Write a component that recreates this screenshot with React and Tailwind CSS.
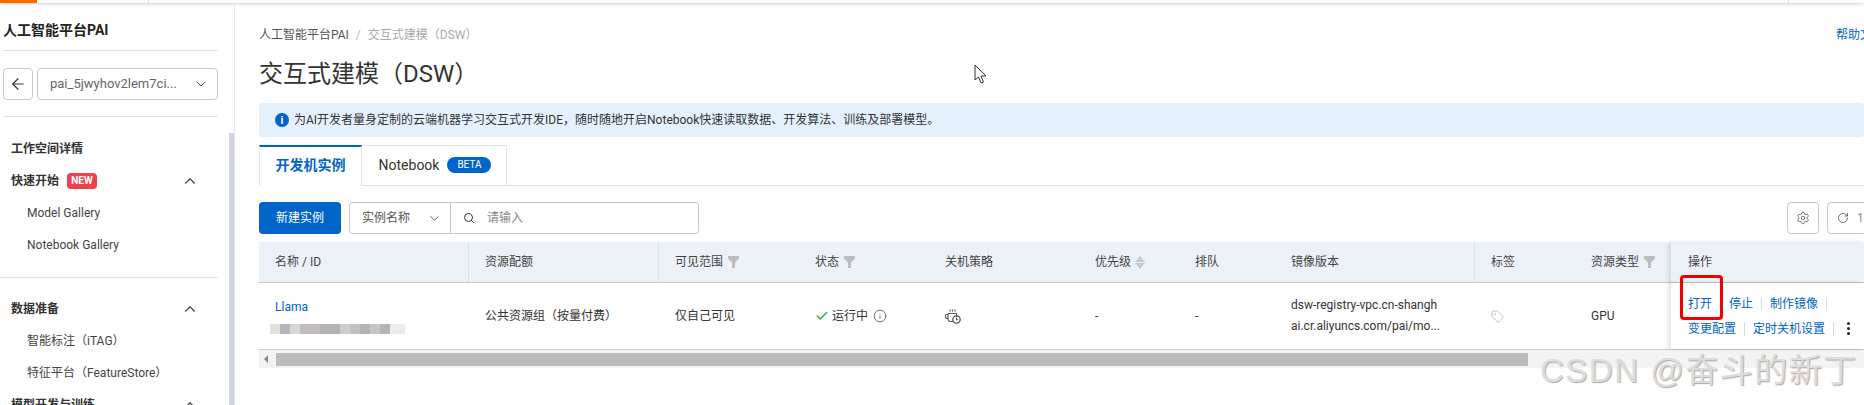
import React from 'react';
import { ArrowLeft, ChevronDown, ChevronUp, Search, Settings, RotateCw, Check, Info, Tag } from 'lucide-react';

const FONT = "font-['Roboto','Noto_Sans_CJK_SC',sans-serif]";
const COLS = 'grid grid-cols-[210px_190px_140px_130px_150px_100px_96px_200px_100px_96px_193px]';

const Funnel = () => (
    <svg width="11" height="12" viewBox="0 0 11 12" className="ml-[5px] text-[#bdbdbd]">
        <path d="M0 0h11v2.5L7 6.5V12H4V6.5L0 2.5z" fill="currentColor" />
    </svg>
);

// cup with a small clock, the shutdown policy icon
const ShutdownIcon = () => (
    <svg width="16" height="15" viewBox="0 0 16 15" fill="none" stroke="#555" strokeWidth="1.1">
        <path d="M5 0.5v2M7.5 0.5v2M10 0.5v2" />
        <path d="M3 4.5h8.5v4M3 4.5v5.5a2.5 2.5 0 0 0 2.5 2.5H8M3 5.5H1.5a1 1 0 0 0-1 1v1.5a1.5 1.5 0 0 0 2.5 1" />
        <circle cx="11.5" cy="10.5" r="3.7" strokeWidth="1.3" />
        <path d="M11.5 9v1.7h1.6" />
    </svg>
);

const Sep = () => <span className="mx-2 inline-block h-[14px] w-px bg-[#d9d9d9]"></span>;

const SideGroup = ({ title, badge, children }) => (
    <div>
        <div className="flex h-8 items-center justify-between pl-[11px] pr-[19px]">
            <div className="flex items-center gap-2 font-bold text-[#333]">
                <span>{title}</span>
                {badge && (
                    <span className="flex h-4 w-[30px] items-center justify-center rounded-sm bg-[#f0404d] text-[10px] font-bold leading-none text-white">
                        {badge}
                    </span>
                )}
            </div>
            <ChevronUp size={18} strokeWidth={1.5} className="text-[#444]" />
        </div>
        {children}
    </div>
);

const SideItem = ({ children }) => (
    <div className="flex h-8 items-center pl-[27px] text-[#444]">{children}</div>
);

const Sidebar = () => (
    <aside className="relative h-full w-[235px] shrink-0 overflow-hidden border-r border-[#e6e6e6] text-xs">
        <div className="w-[218px]">
            <div className="ml-[3px] flex h-[48px] items-center border-b border-[#e3e3e3] pt-[7px] text-sm font-bold text-[#222]">
                人工智能平台PAI
            </div>
            <div className="ml-[3px] flex gap-1 border-b border-[#e3e3e3] pb-4 pt-[17px]">
                <div className="flex h-8 w-[30px] items-center justify-center rounded-sm border border-[#c9c9c9]">
                    <ArrowLeft size={18} strokeWidth={1.5} className="text-[#333]" />
                </div>
                <div className="flex h-8 w-[181px] items-center justify-between rounded-sm border border-[#c9c9c9] pl-3 pr-2 text-[#666]">
                    <span className="text-[13px]">pai_5jwyhov2lem7ci...</span>
                    <ChevronDown size={16} strokeWidth={1.5} className="text-[#555]" />
                </div>
            </div>
            <div className="border-b border-[#e3e3e3] pb-4 pt-4">
                <div className="flex h-8 items-center pl-[11px] font-bold text-[#333]">工作空间详情</div>
                <SideGroup title="快速开始" badge="NEW">
                    <SideItem>Model Gallery</SideItem>
                    <SideItem>Notebook Gallery</SideItem>
                </SideGroup>
            </div>
            <div className="pt-[15px]">
                <SideGroup title="数据准备">
                    <SideItem>智能标注（iTAG）</SideItem>
                    <SideItem>特征平台（FeatureStore）</SideItem>
                </SideGroup>
                <SideGroup title="模型开发与训练" />
            </div>
        </div>
        <div className="absolute bottom-0 right-0 top-[130px] w-[5px] bg-[#cfd4df]"></div>
    </aside>
);

const Head = ({ children, line }) => (
    <div className={`flex h-full items-center pl-4 ${line ? 'border-r border-[#d5e2f0]' : ''}`}>{children}</div>
);

const Cell = ({ children }) => <div className="flex h-full items-center pl-4 text-[#333]">{children}</div>;

const Table = () => (
    <div className="relative mt-2 text-xs">
        <div className={`${COLS} h-[41px] border-b border-[#c8c8c8] bg-[#ecf1f7] text-[#444]`}>
            <Head line>名称 / ID</Head>
            <Head line>资源配额</Head>
            <Head>可见范围<Funnel /></Head>
            <Head>状态<Funnel /></Head>
            <Head>关机策略</Head>
            <Head>
                优先级
                <span className="ml-1 flex flex-col gap-px">
                    <span className="h-0 w-0 border-x-[5px] border-b-[6px] border-x-transparent border-b-[#c4c9d1]"></span>
                    <span className="h-0 w-0 border-x-[5px] border-t-[6px] border-x-transparent border-t-[#c4c9d1]"></span>
                </span>
            </Head>
            <Head>排队</Head>
            <Head line>镜像版本</Head>
            <Head>标签</Head>
            <Head>资源类型<Funnel /></Head>
            <div className="flex h-full items-center pl-[17px] shadow-[-3px_0_4px_rgba(0,0,0,0.1)]">操作</div>
        </div>
        <div className={`${COLS} h-[67px] border-b border-[#c8c8c8]`}>
            <div className="flex h-full flex-col justify-center pl-4">
                <span className="text-[#0064c8]">Llama</span>
                <div className="-ml-[5px] mt-[9px] flex h-[10px] w-[135px] bg-[#d2d2d4]">
                    <span className="w-[10px] bg-[#e3dfdc]"></span>
                    <span className="w-[10px] bg-[#b5b5bb]"></span>
                    <span className="w-[10px] bg-[#d6d6d8]"></span>
                    <span className="w-[20px] bg-[#c0bcbc]"></span>
                    <span className="w-[20px] bg-[#b4b2b3]"></span>
                    <span className="w-[10px] bg-[#cdcdcf]"></span>
                    <span className="w-[10px] bg-[#bfc2c5]"></span>
                    <span className="w-[10px] bg-[#b5b3b5]"></span>
                    <span className="w-[10px] bg-[#c6c6c8]"></span>
                    <span className="w-[10px] bg-[#b8b4b4]"></span>
                    <span className="w-[15px] bg-[#ececec]"></span>
                </div>
            </div>
            <Cell>公共资源组（按量付费）</Cell>
            <Cell>仅自己可见</Cell>
            <Cell>
                <Check size={14} strokeWidth={2.5} className="mr-[3px] text-[#1fb141]" />
                运行中
                <Info size={14} strokeWidth={1.4} className="ml-[5px] text-[#555]" />
            </Cell>
            <Cell>
                <ShutdownIcon />
            </Cell>
            <Cell>-</Cell>
            <Cell>-</Cell>
            <div className="flex h-full flex-col justify-center gap-[6px] pl-4 leading-[15px] text-[#333]">
                <span>dsw-registry-vpc.cn-shangh</span>
                <span>ai.cr.aliyuncs.com/pai/mo...</span>
            </div>
            <Cell>
                <Tag size={13} strokeWidth={1.3} className="text-[#a5a8b5]" />
            </Cell>
            <Cell>GPU</Cell>
            <div className="flex h-full flex-col justify-center gap-[9px] pl-[17px] leading-[16px] text-[#0064c8] shadow-[-3px_0_4px_rgba(0,0,0,0.1)]">
                <div className="flex items-center whitespace-nowrap">
                    <span>打开</span>
                    <span className="w-[17px]"></span>
                    <span>停止</span>
                    <Sep />
                    <span>制作镜像</span>
                    <Sep />
                </div>
                <div className="flex items-center whitespace-nowrap">
                    <span>变更配置</span>
                    <Sep />
                    <span>定时关机设置</span>
                    <Sep />
                    <span className="ml-[5px] flex flex-col gap-[2px]">
                        <span className="h-[3px] w-[3px] rounded-full bg-[#222]"></span>
                        <span className="h-[3px] w-[3px] rounded-full bg-[#222]"></span>
                        <span className="h-[3px] w-[3px] rounded-full bg-[#222]"></span>
                    </span>
                </div>
            </div>
        </div>
        <div className="flex h-[18px] items-center bg-[#f3f3f3] pr-[336px]">
            <span className="ml-[5px] h-0 w-0 border-y-[4px] border-r-[4px] border-y-transparent border-r-[#888]"></span>
            <div className="ml-2 h-[13px] flex-1 bg-[#bcbcbc]"></div>
        </div>
        {/* red highlight round the open button */}
        <div className="absolute left-[1421px] top-[33px] h-[45px] w-[43px] rounded-sm border-[3px] border-[#f00000]"></div>
    </div>
);

const Main = () => (
    <main className="min-w-0 flex-1 overflow-hidden pl-6 pt-4">
        <div className="flex h-6 items-end justify-between text-xs">
            <div className="text-[#555]">
                人工智能平台PAI <span className="mx-1 text-[#bbb]">/</span> <span className="text-[#aaa]">交互式建模（DSW）</span>
            </div>
            <div className="w-7 overflow-hidden whitespace-nowrap text-[#0064c8]">帮助文档</div>
        </div>
        <h1 className="mt-[14px] text-2xl leading-[34px] text-[#333]">交互式建模（DSW）</h1>
        <div className="mt-3 flex h-[34px] items-center rounded-sm bg-[#e4f1fd] pl-4 text-xs text-[#333]">
            <span className="mr-[5px] flex h-[14px] w-[14px] items-center justify-center rounded-full bg-[#0064c8] text-[11px] font-bold leading-none text-white">i</span>
            为AI开发者量身定制的云端机器学习交互式开发IDE，随时随地开启Notebook快速读取数据、开发算法、训练及部署模型。
        </div>
        <div className="mt-2 flex h-[41px] border-b border-[#dedede]">
            <div className="w-[103px] -mb-px border-x border-t-2 border-x-[#e3e3e3] border-t-[#0064c8] bg-white pt-[8px] text-center text-sm font-bold text-[#0064c8]">开发机实例</div>
            <div className="flex w-[145px] items-center justify-center gap-[8px] border-r border-t border-[#e3e3e3] pb-px pl-[2px] text-sm text-[#333]">
                Notebook
                <span className="flex h-4 w-[44px] items-center justify-center rounded-full bg-[#0064c8] text-[10px] text-white">BETA</span>
            </div>
        </div>
        <div className="mt-4 flex h-8 items-center text-xs">
            <div className="flex h-8 w-[82px] items-center justify-center rounded-sm bg-[#0064c8] text-white">新建实例</div>
            <div className="ml-2 flex h-8 w-[102px] items-center justify-between rounded-l-sm border border-[#c9c9c9] pl-3 pr-2 text-[#555]">
                实例名称
                <ChevronDown size={15} strokeWidth={1.5} className="text-[#555]" />
            </div>
            <div className="flex h-8 w-[248px] items-center rounded-r-sm border border-l-0 border-[#c9c9c9] pl-3 text-[#888]">
                <Search size={12} strokeWidth={2} className="mr-[12px] text-[#333]" />
                请输入
            </div>
            <div className="ml-auto flex h-8 w-8 shrink-0 items-center justify-center rounded-sm border border-[#c9c9c9]">
                <Settings size={14} strokeWidth={1.3} className="text-[#555]" />
            </div>
            <div className="-mr-[30px] ml-2 flex h-8 w-[67px] shrink-0 items-center whitespace-nowrap rounded-sm border border-[#c9c9c9] pl-[9px] text-[#888]">
                <RotateCw size={12} strokeWidth={1.5} className="mr-2 text-[#444]" />
                1分钟
            </div>
        </div>
        <Table />
    </main>
);

export default function App() {
    return (
        <div className={`${FONT} relative h-[405px] w-[1864px] overflow-hidden bg-[#fefefe]`}>
            <div className="relative flex h-[3px] items-start justify-between bg-white pr-[75px] shadow-[0_1px_3px_rgba(0,0,0,0.2)]">
                <div className="flex h-[3px]">
                    <div className="w-[37px] bg-[#ff6a00]"></div>
                    <div className="ml-[111px] w-px bg-[#e0e0e0]"></div>
                </div>
                <div className="h-[3px] w-px bg-[#e0e0e0]"></div>
            </div>
            <div className="flex h-[402px]">
                <Sidebar />
                <Main />
            </div>
            {/* mouse pointer caught in the screenshot */}
            <svg width="14" height="20" viewBox="0 0 14 20" className="absolute left-[974px] top-[64px]">
                <path d="M1 1v15l3.5-3 2.5 6 2.5-1-2.5-6H12z" fill="#fff" stroke="#333" strokeWidth="1" />
            </svg>
            {/* blog watermark */}
            <div className="absolute left-[1540px] top-[352px] whitespace-nowrap font-['Liberation_Sans','Noto_Sans_CJK_SC',sans-serif] text-[33px] leading-[38px] tracking-[1.5px] text-[#dcdcdc] [text-shadow:1px_1px_1px_#aaa]">
                CSDN @奋斗的新丁
            </div>
        </div>
    );
}
